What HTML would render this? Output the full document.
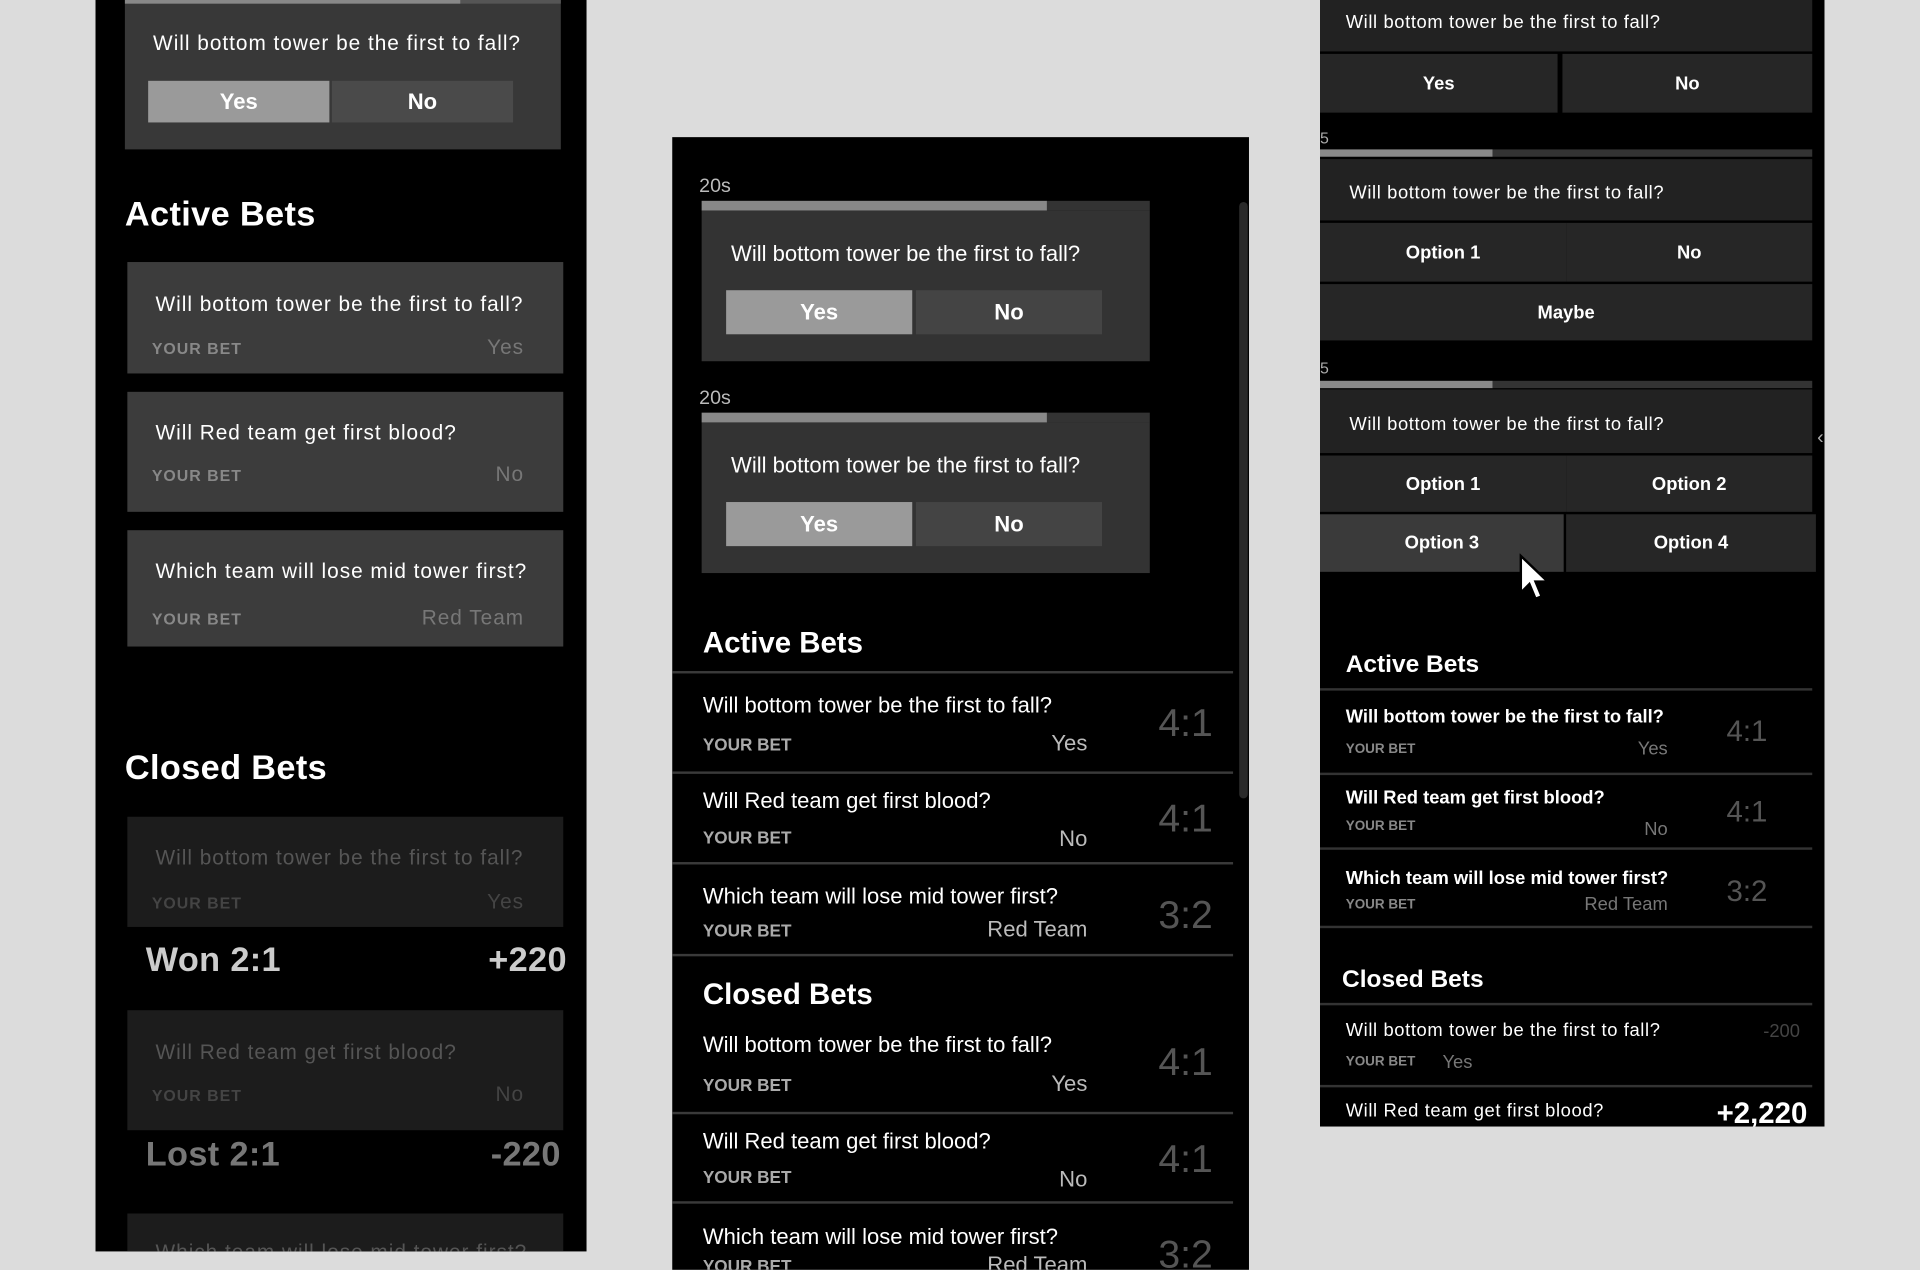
<!DOCTYPE html>
<html><head><meta charset="utf-8"><style>
*{margin:0;padding:0;box-sizing:border-box}
html,body{width:1920px;height:1270px;overflow:hidden;background:#dcdcdc}
#w{position:absolute;left:0;top:0;width:1568px;height:1037px;transform:scale(1.22449);transform-origin:0 0;font-family:"Liberation Sans",sans-serif}
.a{position:absolute}
.p{position:absolute;background:#000;overflow:hidden}
.t{position:absolute;white-space:nowrap;line-height:1}
.b{font-weight:bold}
.btn{position:absolute;color:#fff;font-weight:bold;display:flex;align-items:center;justify-content:center}
.p1 .t{letter-spacing:0.8px}
.p1 .h{letter-spacing:0.3px}
.p3 .q{letter-spacing:0.5px}
</style></head><body><div id="w">

<!-- Panel 1 -->
<div class="p p1" style="left:78px;top:0;width:401px;height:1022px">
 <div class="a" style="left:24px;top:0;width:356px;height:122px;background:#383838"></div>
 <div class="a" style="left:24px;top:0;width:274px;height:3px;background:#888"></div>
 <div class="a" style="left:298px;top:0;width:82px;height:3px;background:#555"></div>
 <div class="t" style="left:47px;top:27px;font-size:17px;color:#fff">Will bottom tower be the first to fall?</div>
 <div class="btn" style="left:43px;top:66px;width:148px;height:34px;background:#9a9a9a;font-size:18px">Yes</div>
 <div class="btn" style="left:193px;top:66px;width:148px;height:34px;background:#4a4a4a;font-size:18px">No</div>
 <div class="t b h" style="left:24px;top:161px;font-size:28px;color:#fff">Active Bets</div>

 <div class="a" style="left:26px;top:214px;width:356px;height:91px;background:#3c3c3c"></div>
 <div class="t" style="left:49px;top:240px;font-size:17px;color:#fff">Will bottom tower be the first to fall?</div>
 <div class="t b" style="left:46px;top:278px;font-size:13px;color:#888">YOUR BET</div>
 <div class="t" style="right:51px;top:275px;font-size:17px;color:#777">Yes</div>

 <div class="a" style="left:26px;top:320px;width:356px;height:98px;background:#3c3c3c"></div>
 <div class="t" style="left:49px;top:345px;font-size:17px;color:#fff">Will Red team get first blood?</div>
 <div class="t b" style="left:46px;top:382px;font-size:13px;color:#888">YOUR BET</div>
 <div class="t" style="right:51px;top:379px;font-size:17px;color:#777">No</div>

 <div class="a" style="left:26px;top:433px;width:356px;height:95px;background:#3c3c3c"></div>
 <div class="t" style="left:49px;top:458px;font-size:17px;color:#fff">Which team will lose mid tower first?</div>
 <div class="t b" style="left:46px;top:499px;font-size:13px;color:#888">YOUR BET</div>
 <div class="t" style="right:51px;top:496px;font-size:17px;color:#777">Red Team</div>

 <div class="t b h" style="left:24px;top:613px;font-size:28px;color:#fff">Closed Bets</div>

 <div class="a" style="left:26px;top:667px;width:356px;height:90px;background:#1c1c1c"></div>
 <div class="t" style="left:49px;top:692px;font-size:17px;color:#555">Will bottom tower be the first to fall?</div>
 <div class="t b" style="left:46px;top:731px;font-size:13px;color:#444">YOUR BET</div>
 <div class="t" style="right:51px;top:728px;font-size:17px;color:#444">Yes</div>
 <div class="t b h" style="left:41px;top:770px;font-size:28px;color:#ccc">Won 2:1</div>
 <div class="t b h" style="right:16px;top:770px;font-size:28px;color:#ccc">+220</div>

 <div class="a" style="left:26px;top:825px;width:356px;height:98px;background:#1c1c1c"></div>
 <div class="t" style="left:49px;top:851px;font-size:17px;color:#555">Will Red team get first blood?</div>
 <div class="t b" style="left:46px;top:888px;font-size:13px;color:#444">YOUR BET</div>
 <div class="t" style="right:51px;top:885px;font-size:17px;color:#444">No</div>
 <div class="t b h" style="left:41px;top:929px;font-size:28px;color:#777">Lost 2:1</div>
 <div class="t b h" style="right:21px;top:929px;font-size:28px;color:#777">-220</div>

 <div class="a" style="left:26px;top:991px;width:356px;height:40px;background:#1c1c1c"></div>
 <div class="t" style="left:49px;top:1014px;font-size:17px;color:#555">Which team will lose mid tower first?</div>
</div>

<!-- Panel 2 -->
<div class="p" style="left:549px;top:112px;width:471px;height:925px">
 <div class="t" style="left:22px;top:33px;font-size:16px;color:#bbb">20s</div>
 <div class="a" style="left:24px;top:52px;width:282px;height:8px;background:#888"></div>
 <div class="a" style="left:306px;top:52px;width:84px;height:8px;background:#333"></div>
 <div class="a" style="left:24px;top:60px;width:366px;height:123px;background:#333"></div>
 <div class="t" style="left:48px;top:86px;font-size:18px;color:#fff">Will bottom tower be the first to fall?</div>
 <div class="btn" style="left:44px;top:125px;width:152px;height:36px;background:#9a9a9a;font-size:18px">Yes</div>
 <div class="btn" style="left:199px;top:125px;width:152px;height:36px;background:#444;font-size:18px">No</div>

 <div class="t" style="left:22px;top:206px;font-size:16px;color:#bbb">20s</div>
 <div class="a" style="left:24px;top:225px;width:282px;height:8px;background:#888"></div>
 <div class="a" style="left:306px;top:225px;width:84px;height:8px;background:#333"></div>
 <div class="a" style="left:24px;top:233px;width:366px;height:123px;background:#333"></div>
 <div class="t" style="left:48px;top:259px;font-size:18px;color:#fff">Will bottom tower be the first to fall?</div>
 <div class="btn" style="left:44px;top:298px;width:152px;height:36px;background:#9a9a9a;font-size:18px">Yes</div>
 <div class="btn" style="left:199px;top:298px;width:152px;height:36px;background:#444;font-size:18px">No</div>

 <div class="a" style="left:463px;top:53px;width:7px;height:487px;background:#2a2a2a;border-radius:4px"></div>

 <div class="t b" style="left:25px;top:402px;font-size:24px;color:#fff">Active Bets</div>
 <div class="a" style="left:0;top:436px;width:458px;height:2px;background:#3a3a3a"></div>
 <div class="t" style="left:25px;top:455px;font-size:18px;color:#fff">Will bottom tower be the first to fall?</div>
 <div class="t b" style="left:25px;top:489px;font-size:14px;color:#aaa">YOUR BET</div>
 <div class="t" style="right:132px;top:486px;font-size:18px;color:#bbb">Yes</div>
 <div class="t" style="left:397px;top:462px;font-size:32px;color:#555">4:1</div>
 <div class="a" style="left:0;top:518px;width:458px;height:2px;background:#3a3a3a"></div>
 <div class="t" style="left:25px;top:533px;font-size:18px;color:#fff">Will Red team get first blood?</div>
 <div class="t b" style="left:25px;top:565px;font-size:14px;color:#aaa">YOUR BET</div>
 <div class="t" style="right:132px;top:564px;font-size:18px;color:#bbb">No</div>
 <div class="t" style="left:397px;top:540px;font-size:32px;color:#555">4:1</div>
 <div class="a" style="left:0;top:592px;width:458px;height:2px;background:#3a3a3a"></div>
 <div class="t" style="left:25px;top:611px;font-size:18px;color:#fff">Which team will lose mid tower first?</div>
 <div class="t b" style="left:25px;top:641px;font-size:14px;color:#aaa">YOUR BET</div>
 <div class="t" style="right:132px;top:638px;font-size:18px;color:#bbb">Red Team</div>
 <div class="t" style="left:397px;top:619px;font-size:32px;color:#555">3:2</div>
 <div class="a" style="left:0;top:667px;width:458px;height:2px;background:#3a3a3a"></div>

 <div class="t b" style="left:25px;top:689px;font-size:24px;color:#fff">Closed Bets</div>
 <div class="t" style="left:25px;top:732px;font-size:18px;color:#fff">Will bottom tower be the first to fall?</div>
 <div class="t b" style="left:25px;top:767px;font-size:14px;color:#aaa">YOUR BET</div>
 <div class="t" style="right:132px;top:764px;font-size:18px;color:#bbb">Yes</div>
 <div class="t" style="left:397px;top:739px;font-size:32px;color:#555">4:1</div>
 <div class="a" style="left:0;top:796px;width:458px;height:2px;background:#3a3a3a"></div>
 <div class="t" style="left:25px;top:811px;font-size:18px;color:#fff">Will Red team get first blood?</div>
 <div class="t b" style="left:25px;top:842px;font-size:14px;color:#aaa">YOUR BET</div>
 <div class="t" style="right:132px;top:842px;font-size:18px;color:#bbb">No</div>
 <div class="t" style="left:397px;top:818px;font-size:32px;color:#555">4:1</div>
 <div class="a" style="left:0;top:869px;width:458px;height:2px;background:#3a3a3a"></div>
 <div class="t" style="left:25px;top:889px;font-size:18px;color:#fff">Which team will lose mid tower first?</div>
 <div class="t b" style="left:25px;top:915px;font-size:14px;color:#aaa">YOUR BET</div>
 <div class="t" style="right:132px;top:912px;font-size:18px;color:#bbb">Red Team</div>
 <div class="t" style="left:397px;top:896px;font-size:32px;color:#555">3:2</div>
</div>

<!-- Panel 3 -->
<div class="p p3" style="left:1078px;top:0;width:412px;height:920px">
 <div class="a" style="left:0;top:0;width:402px;height:42px;background:#222"></div>
 <div class="t q" style="left:21px;top:11px;font-size:15px;color:#fff">Will bottom tower be the first to fall?</div>
 <div class="btn" style="left:0;top:44px;width:194px;height:48px;background:#262626;font-size:15px">Yes</div>
 <div class="btn" style="left:198px;top:44px;width:204px;height:48px;background:#262626;font-size:15px">No</div>

 <div class="t" style="left:0;top:106px;font-size:13px;color:#aaa">5</div>
 <div class="a" style="left:0;top:122px;width:141px;height:6px;background:#888"></div>
 <div class="a" style="left:141px;top:122px;width:261px;height:6px;background:#333"></div>
 <div class="a" style="left:0;top:130px;width:402px;height:50px;background:#222"></div>
 <div class="t q" style="left:24px;top:150px;font-size:15px;color:#fff">Will bottom tower be the first to fall?</div>
 <div class="btn" style="left:0;top:182px;width:201px;height:48px;background:#262626;font-size:15px">Option 1</div>
 <div class="btn" style="left:201px;top:182px;width:201px;height:48px;background:#262626;font-size:15px">No</div>
 <div class="btn" style="left:0;top:232px;width:402px;height:46px;background:#262626;font-size:15px">Maybe</div>

 <div class="t" style="left:0;top:294px;font-size:13px;color:#aaa">5</div>
 <div class="a" style="left:0;top:311px;width:141px;height:6px;background:#888"></div>
 <div class="a" style="left:141px;top:311px;width:261px;height:6px;background:#333"></div>
 <div class="a" style="left:0;top:318px;width:402px;height:52px;background:#222"></div>
 <div class="t q" style="left:24px;top:339px;font-size:15px;color:#fff">Will bottom tower be the first to fall?</div>
 <div class="btn" style="left:0;top:372px;width:201px;height:46px;background:#262626;font-size:15px">Option 1</div>
 <div class="btn" style="left:201px;top:372px;width:201px;height:46px;background:#262626;font-size:15px">Option 2</div>
 <div class="btn" style="left:0;top:420px;width:199px;height:47px;background:#3a3a3a;font-size:15px">Option 3</div>
 <div class="btn" style="left:201px;top:420px;width:204px;height:47px;background:#262626;font-size:15px">Option 4</div>
 <svg class="a" style="left:162px;top:452px" width="30" height="42" viewBox="0 0 30 42"><path d="M2 2 L2 32 L9 25 L14 37 L19 35 L14 23 L24 23 Z" fill="#fff" stroke="#000" stroke-width="2"/></svg>
 <div class="t" style="left:406px;top:350px;font-size:16px;color:#aaa">‹</div>

 <div class="t b" style="left:21px;top:533px;font-size:20px;color:#fff">Active Bets</div>
 <div class="a" style="left:0;top:562px;width:402px;height:2px;background:#333"></div>
 <div class="t b" style="left:21px;top:578px;font-size:15px;color:#fff">Will bottom tower be the first to fall?</div>
 <div class="t b" style="left:21px;top:607px;font-size:11px;color:#888">YOUR BET</div>
 <div class="t" style="right:128px;top:604px;font-size:15px;color:#777">Yes</div>
 <div class="t" style="left:332px;top:586px;font-size:24px;color:#555">4:1</div>
 <div class="a" style="left:0;top:631px;width:402px;height:2px;background:#333"></div>
 <div class="t b" style="left:21px;top:644px;font-size:15px;color:#fff">Will Red team get first blood?</div>
 <div class="t b" style="left:21px;top:670px;font-size:11px;color:#888">YOUR BET</div>
 <div class="t" style="right:128px;top:670px;font-size:15px;color:#777">No</div>
 <div class="t" style="left:332px;top:652px;font-size:24px;color:#555">4:1</div>
 <div class="a" style="left:0;top:692px;width:402px;height:2px;background:#333"></div>
 <div class="t b" style="left:21px;top:710px;font-size:15px;color:#fff">Which team will lose mid tower first?</div>
 <div class="t b" style="left:21px;top:734px;font-size:11px;color:#888">YOUR BET</div>
 <div class="t" style="right:128px;top:731px;font-size:15px;color:#777">Red Team</div>
 <div class="t" style="left:332px;top:717px;font-size:24px;color:#555">3:2</div>
 <div class="a" style="left:0;top:756px;width:402px;height:2px;background:#333"></div>

 <div class="t b" style="left:18px;top:790px;font-size:20px;color:#fff">Closed Bets</div>
 <div class="a" style="left:0;top:819px;width:402px;height:2px;background:#333"></div>
 <div class="t q" style="left:21px;top:834px;font-size:15px;color:#fff">Will bottom tower be the first to fall?</div>
 <div class="t b" style="left:21px;top:862px;font-size:11px;color:#888">YOUR BET</div>
 <div class="t" style="left:100px;top:860px;font-size:15px;color:#777">Yes</div>
 <div class="t" style="right:20px;top:835px;font-size:15px;color:#444">-200</div>
 <div class="a" style="left:0;top:886px;width:402px;height:2px;background:#333"></div>
 <div class="t q" style="left:21px;top:900px;font-size:15px;color:#fff">Will Red team get first blood?</div>
 <div class="t b" style="right:14px;top:898px;font-size:24px;color:#fff">+2,220</div>
</div>

</div></body></html>
